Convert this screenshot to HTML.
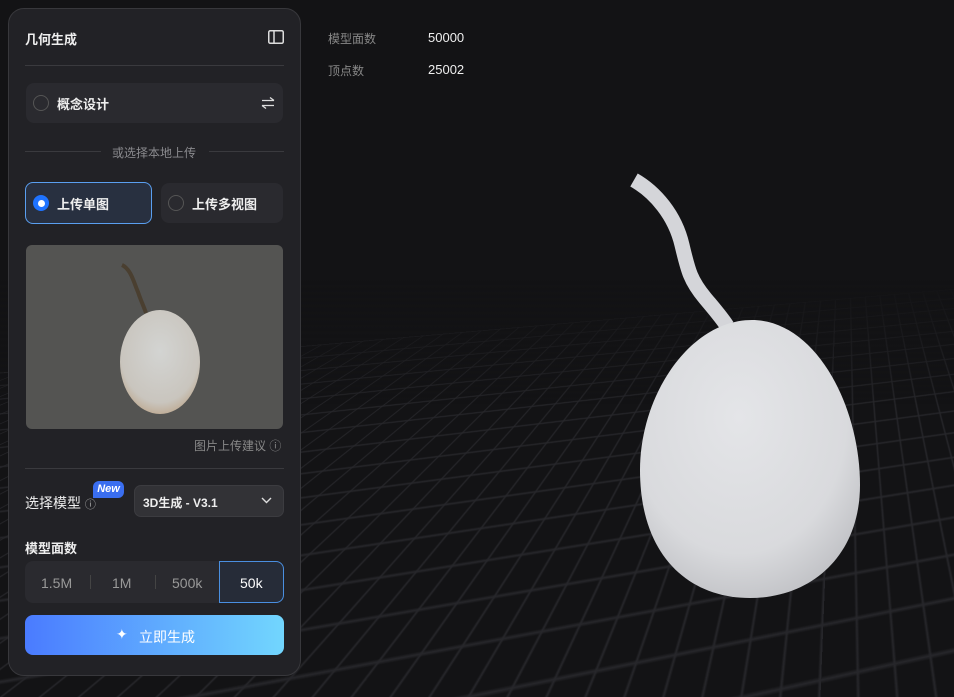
<!DOCTYPE html>
<html><head><meta charset="utf-8"><style>
*{box-sizing:border-box;margin:0;padding:0}
html,body{width:954px;height:697px;overflow:hidden}
body{background:#131315;font-family:"Liberation Sans","Noto Sans CJK SC",sans-serif;position:relative;color:#fff}
.abs{position:absolute}
.panel{left:8px;top:8px;width:293px;height:668px;border:1px solid #38383c;border-radius:16px;background:#222226}
.t{font-size:13px;font-weight:bold;color:#eee}
.radio{width:16px;height:16px;border:1.5px solid #555;border-radius:50%;position:absolute}
.box{background:#2a2a2f;border-radius:8px}
.persp{left:0;top:0;width:954px;height:697px;perspective:380px;perspective-origin:900px 120px;overflow:hidden;contain:strict}
.plane{position:absolute;left:-1200px;top:320px;width:3600px;height:2000px;transform-origin:50% 0;transform:rotateX(80deg) rotateZ(-8deg);
background-image:linear-gradient(#26262a 1px,transparent 1px),linear-gradient(90deg,#26262a 1px,transparent 1px);background-size:16px 16px}
</style></head><body>
<div class="abs persp"><div class="plane"></div></div>
<svg class="abs" style="left:0;top:0" width="954" height="697">
<defs><linearGradient id="fade" x1="0" y1="0" x2="0" y2="1"><stop offset="0.4" stop-color="#131315" stop-opacity="1"/><stop offset="0.58" stop-color="#131315" stop-opacity="0"/></linearGradient>
<radialGradient id="egg" cx="0.45" cy="0.35" r="0.7"><stop offset="0" stop-color="#e4e5e8"/><stop offset="0.7" stop-color="#d9dadd"/><stop offset="1" stop-color="#bfc0c4"/></radialGradient></defs>
<rect x="0" y="0" width="954" height="697" fill="url(#fade)"/>
<path d="M634 180 C655 192 675 215 682 245 C688 270 690 280 705 298 C715 310 722 318 727 326" stroke="#d4d5d9" stroke-width="15" fill="none"/>
<path d="M752 320 C815 320 860 405 860 485 C860 555 812 598 750 598 C688 598 640 555 640 470 C640 395 690 320 752 320Z" fill="url(#egg)"/>
</svg>
<div class="abs" style="left:328px;top:30px;font-size:12px;color:#888">模型面数</div>
<div class="abs" style="left:428px;top:30px;font-size:13px;color:#eee">50000</div>
<div class="abs" style="left:328px;top:62px;font-size:12px;color:#888">顶点数</div>
<div class="abs" style="left:428px;top:62px;font-size:13px;color:#eee">25002</div>

<div class="abs panel"></div>
<div class="abs t" style="left:25px;top:29px">几何生成</div>
<svg class="abs" style="left:268px;top:30px" width="16" height="14"><rect x="0.75" y="0.75" width="14.5" height="12.5" rx="1.5" fill="none" stroke="#ddd" stroke-width="1.5"/><line x1="6" y1="1" x2="6" y2="13" stroke="#ddd" stroke-width="1.5"/></svg>
<div class="abs" style="left:25px;top:65px;width:259px;height:1px;background:#3a3a3e"></div>
<div class="abs box" style="left:26px;top:83px;width:257px;height:40px"></div>
<div class="radio" style="left:33px;top:95px"></div>
<div class="abs t" style="left:57px;top:94px">概念设计</div>
<svg class="abs" style="left:261px;top:97px" width="14" height="12"><path d="M1 3.5H13M9 0.5L13 3.5M13 8.5H1M5 11.5L1 8.5" stroke="#ddd" stroke-width="1.3" fill="none"/></svg>
<div class="abs" style="left:25px;top:151px;width:76px;height:1px;background:#3a3a3e"></div>
<div class="abs" style="left:209px;top:151px;width:75px;height:1px;background:#3a3a3e"></div>
<div class="abs" style="left:112px;top:144px;font-size:12px;color:#8a8a8e">或选择本地上传</div>
<div class="abs" style="left:25px;top:182px;width:127px;height:42px;border-radius:8px;background:#283040;border:1px solid #5a9ff0"></div>
<div class="abs" style="left:33px;top:195px;width:16px;height:16px;border-radius:50%;background:#1f73ff"></div>
<div class="abs" style="left:37.5px;top:199.5px;width:7px;height:7px;border-radius:50%;background:#fff"></div>
<div class="abs t" style="left:57px;top:194px">上传单图</div>
<div class="abs box" style="left:161px;top:183px;width:122px;height:40px"></div>
<div class="radio" style="left:168px;top:195px"></div>
<div class="abs t" style="left:192px;top:194px">上传多视图</div>
<div class="abs" style="left:26px;top:245px;width:257px;height:184px;border-radius:6px;background:#545452;overflow:hidden">
<svg width="257" height="184"><path d="M96 20C105 24 108 38 112 47C115 56 118 62 120 68" stroke="#4a3f30" stroke-width="4" fill="none"/>
<defs><radialGradient id="s" cx="0.5" cy="0.4" r="0.7"><stop offset="0" stop-color="#d3d4d2"/><stop offset="0.7" stop-color="#c9c5be"/><stop offset="1" stop-color="#b89a78"/></radialGradient></defs>
<ellipse cx="134" cy="117" rx="40" ry="52" fill="url(#s)"/></svg></div>
<div class="abs" style="left:194px;top:437px;font-size:12px;color:#888">图片上传建议 ⓘ</div>
<div class="abs" style="left:25px;top:468px;width:259px;height:1px;background:#3a3a3e"></div>
<div class="abs" style="left:25px;top:493px;font-size:14px;color:#eee">选择模型 <span style="font-size:11px;color:#aaa">ⓘ</span></div>
<div class="abs" style="left:93px;top:481px;width:31px;height:17px;border-radius:6px 6px 6px 0;background:#3a6ef0;font-size:11px;font-style:italic;font-weight:bold;text-align:center;line-height:17px">New</div>
<div class="abs" style="left:134px;top:485px;width:150px;height:32px;border-radius:7px;background:#323236;border:1px solid #3c3c40"></div>
<div class="abs" style="left:143px;top:494px;font-size:12px;font-weight:bold;color:#eee">3D生成 - V3.1</div>
<svg class="abs" style="left:261px;top:497px" width="11" height="7"><path d="M1 1L5.5 5.5L10 1" stroke="#ddd" stroke-width="1.4" fill="none"/></svg>
<div class="abs t" style="left:25px;top:538px;font-size:13px">模型面数</div>
<div class="abs box" style="left:25px;top:561px;width:259px;height:42px"></div>
<div class="abs" style="left:90px;top:575px;width:1px;height:14px;background:#444"></div>
<div class="abs" style="left:155px;top:575px;width:1px;height:14px;background:#444"></div>
<div class="abs" style="left:41px;top:575px;font-size:14px;color:#999">1.5M</div>
<div class="abs" style="left:112px;top:575px;font-size:14px;color:#999">1M</div>
<div class="abs" style="left:172px;top:575px;font-size:14px;color:#999">500k</div>
<div class="abs" style="left:219px;top:561px;width:65px;height:42px;border-radius:0 8px 8px 0;background:#262c38;border:1px solid #4a8fe0"></div>
<div class="abs" style="left:240px;top:575px;font-size:14px;color:#fff">50k</div>
<div class="abs" style="left:25px;top:615px;width:259px;height:40px;border-radius:8px;background:linear-gradient(90deg,#4a7bff,#72d6fe)"></div>
<div class="abs" style="left:116px;top:626px;font-size:14px">✦</div>
<div class="abs" style="left:139px;top:627px;font-size:14px;color:#fff">立即生成</div>
</body></html>
